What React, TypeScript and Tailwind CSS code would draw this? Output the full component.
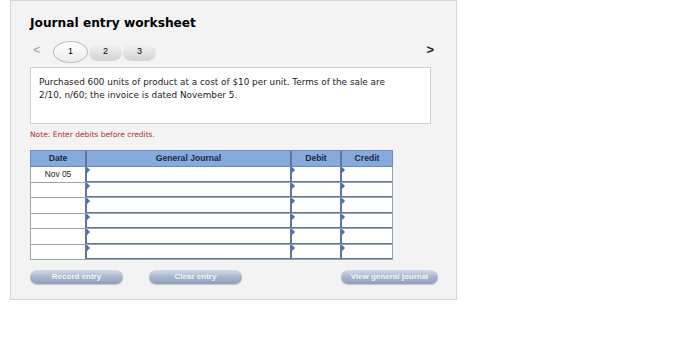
import React from "react";

const Marker = () => (
  <span className="absolute left-0 top-0 w-0 h-0 border-t-[3px] border-b-[3px] border-l-[3px] border-t-transparent border-b-transparent border-l-[#3b6fc4]" />
);

const rows = ["Nov 05", "", "", "", "", ""];

function Btn({ label, w }: { label: string; w: string }) {
  return (
    <div
      className={`${w} h-[14px] rounded-full flex items-center justify-center text-[8px] font-bold text-[#f1f4f9] bg-gradient-to-b from-[#d3dbe7] via-[#a7b6cc] to-[#8d9fbb] shadow-[0_1px_1px_rgba(0,0,0,0.2)]`}
      style={{ fontFamily: '"Liberation Sans", Arial, sans-serif' }}
    >
      {label}
    </div>
  );
}

export default function App() {
  return (
    <div className="w-[700px] h-[354px] bg-white" style={{ fontFamily: '"DejaVu Sans", Verdana, sans-serif' }}>
      <div className="ml-[10px] w-[447px] h-[300px] border border-[#d6d6d6] bg-[#f3f3f3] pl-[19px] pt-[13px] flex flex-col">
        <div className="text-[12.2px] font-bold text-black leading-[18px]">Journal entry worksheet</div>
        <div className="mt-[9px] flex items-center h-[22px] w-[401px]">
          <span className="self-start mt-[2px] text-[#a0a0a0] text-[13px] leading-none ml-[3px] w-[20px]" style={{ fontFamily: '"Liberation Sans", sans-serif' }}>&lt;</span>
          <div className="flex items-center">
            <div className="w-[35px] h-[22px] rounded-[50%] border border-[#bdbdbd] bg-gradient-to-b from-[#ffffff] to-[#ececec] flex items-center justify-center text-[9px] text-black" style={{ fontFamily: '"Liberation Sans", sans-serif' }}>1</div>
            <div className="ml-[1px] w-[33px] h-[17px] rounded-full bg-gradient-to-b from-[#f2f2f2] to-[#d3d3d3] flex items-center justify-center text-[9px] text-black" style={{ fontFamily: '"Liberation Sans", sans-serif' }}>2</div>
            <div className="ml-[1px] w-[33px] h-[17px] rounded-full bg-gradient-to-b from-[#f2f2f2] to-[#d3d3d3] flex items-center justify-center text-[9px] text-black" style={{ fontFamily: '"Liberation Sans", sans-serif' }}>3</div>
          </div>
          <span className="self-start mt-[2px] ml-auto mr-[-3px] text-[#222] text-[13px] font-bold leading-none" style={{ fontFamily: '"Liberation Sans", sans-serif' }}>&gt;</span>
        </div>
        <div className="mt-[4px] w-[401px] h-[57px] bg-white border border-[#cfcfcf] pl-[8px] pt-[8px] text-[8.85px] leading-[13px] text-[#222]">
          Purchased 600 units of product at a cost of $10 per unit. Terms of the sale are<br />
          2/10, n/60; the invoice is dated November 5.
        </div>
        <div className="mt-[6px] text-[7.5px] text-[#b0302a] leading-[10px]">Note: Enter debits before credits.</div>
        <div className="mt-[10px] w-[363px]" style={{ fontFamily: '"Liberation Sans", Arial, sans-serif' }}>
          <div className="flex h-[17px] bg-[#86a9de] border border-[#6e8bb5] text-[8.6px] font-bold text-[#1a2a44]">
            <div className="w-[56px] flex items-center justify-center border-r-2 border-[#5f7698]">Date</div>
            <div className="w-[205px] flex items-center justify-center border-r-2 border-[#5f7698]">General Journal</div>
            <div className="w-[50px] flex items-center justify-center border-r-2 border-[#5f7698]">Debit</div>
            <div className="flex-1 flex items-center justify-center">Credit</div>
          </div>
          {rows.map((d, i) => (
            <div key={i} className="flex h-[15.5px] bg-white border-x border-b border-[#9aa3b0]">
              <div className="w-[56px] flex items-center justify-center border-r-2 border-[#5f7698] text-[8.4px] text-[#222]">{d}</div>
              <div className="relative w-[205px] border-r-2 border-[#5f7698] border-b border-b-[#5f7698]"><Marker /></div>
              <div className="relative w-[50px] border-r-2 border-[#5f7698] border-b border-b-[#5f7698]"><Marker /></div>
              <div className="relative flex-1 border-b border-b-[#5f7698]"><Marker /></div>
            </div>
          ))}
        </div>
        <div className="mt-[10px] w-[408px] flex items-center">
          <Btn label="Record entry" w="w-[93px]" />
          <div className="ml-[26px]"><Btn label="Clear entry" w="w-[93px]" /></div>
          <div className="ml-auto"><Btn label="View general journal" w="w-[97px]" /></div>
        </div>
      </div>
    </div>
  );
}
